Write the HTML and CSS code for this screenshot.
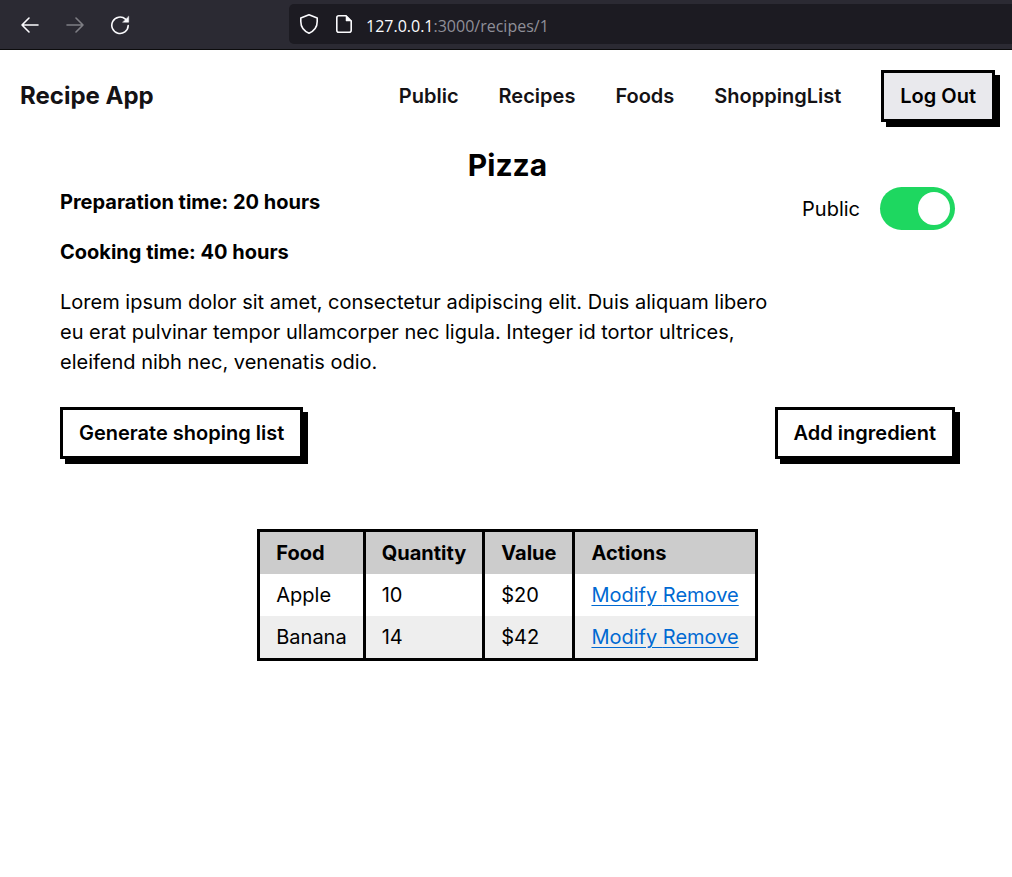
FILE: index.html
```html
<!DOCTYPE html>
<html lang="en">
<head>
<meta charset="utf-8">
<meta name="viewport" content="width=device-width, initial-scale=1">
<title>Recipe App</title>
<link rel="stylesheet" href="styles.css">
</head>
<body>
<div class="toolbar">
  <div class="toolbar-nav">
    <button class="tool" type="button" aria-label="Back">
      <svg viewBox="0 0 20 20" width="20" height="20"><path d="M18 10H2M9 3L2 10l7 7"/></svg>
    </button>
    <button class="tool tool-off" type="button" aria-label="Forward" disabled>
      <svg viewBox="0 0 20 20" width="20" height="20"><path d="M2 10h16M11 3l7 7-7 7"/></svg>
    </button>
    <button class="tool" type="button" aria-label="Reload">
      <svg viewBox="0 0 20 20" width="20" height="20"><path d="M15.5 4.200A8.200 8.200 0 1 0 18.200 10.500"/><path class="solid" d="M18.700 1.500v5.700h-5.800z"/></svg>
    </button>
  </div>
  <div class="address">
    <div class="site-icons">
      <svg viewBox="0 0 20 22" width="20" height="22"><path d="M10 1.800L18.200 5V8.500C18.200 13.500 15 18 10 20.200C5 18 1.800 13.500 1.800 8.500V5Z"/></svg>
      <svg viewBox="0 0 20 22" width="20" height="22"><path d="M12 2.800H4.800a2 2 0 0 0-2 2v12.400a2 2 0 0 0 2 2h10.400a2 2 0 0 0 2-2V8z"/><path class="solid" d="M12 2.800v5.200h5.200z"/></svg>
    </div>
    <span class="url"><span class="host">127.0.0.1</span>:3000/recipes/1</span>
  </div>
</div>

<header class="header">
  <a class="brand" href="#">Recipe App</a>
  <nav class="menu">
    <a href="#">Public</a>
    <a href="#">Recipes</a>
    <a href="#">Foods</a>
    <a href="#">ShoppingList</a>
    <button class="btn btn-tinted" type="button">Log Out</button>
  </nav>
</header>

<main class="recipe">
  <h1 class="title">Pizza</h1>
  <div class="summary">
    <div class="details">
      <p class="time">Preparation time: 20 hours</p>
      <p class="time">Cooking time: 40 hours</p>
      <p>Lorem ipsum dolor sit amet, consectetur adipiscing elit. Duis aliquam libero eu erat pulvinar tempor ullamcorper nec ligula. Integer id tortor ultrices, eleifend nibh nec, venenatis odio.</p>
    </div>
    <div class="visibility">
      <label for="public">Public</label>
      <input class="switch" id="public" type="checkbox" checked>
    </div>
  </div>
  <div class="actions">
    <button class="btn" type="button">Generate shoping list</button>
    <button class="btn" type="button">Add ingredient</button>
  </div>
  <table class="foods">
    <thead>
      <tr><th>Food</th><th>Quantity</th><th>Value</th><th>Actions</th></tr>
    </thead>
    <tbody>
      <tr><td>Apple</td><td>10</td><td>$20</td><td><a href="#">Modify </a><a href="#">Remove</a></td></tr>
      <tr><td>Banana</td><td>14</td><td>$42</td><td><a href="#">Modify </a><a href="#">Remove</a></td></tr>
    </tbody>
  </table>
</main>
</body>
</html>
```
FILE: styles.css
```css
* {
  box-sizing: border-box;
}

body {
  margin: 0;
  background: #fff;
  color: #000;
  font: 400 20px/30px Inter, sans-serif;
}

p,
h1 {
  margin: 0;
}

/* Browser toolbar */
.toolbar {
  display: flex;
  align-items: center;
  height: 50px;
  padding-bottom: 1px;
  background: #2b2a33;
  border-bottom: 1px solid #0c0c0d;
}

.toolbar-nav {
  display: flex;
  flex: none;
  gap: 25px;
  width: 289px;
  padding: 1px 0 0 20px;
}

.toolbar svg {
  display: block;
  fill: none;
  stroke: #fbfbfe;
  stroke-width: 1.6;
  stroke-linecap: round;
  stroke-linejoin: round;
}

.toolbar .solid {
  fill: #fbfbfe;
  stroke-width: 0.5;
}

.tool {
  padding: 0;
  border: 0;
  background: none;
}

.tool-off {
  opacity: 0.4;
}

.address {
  display: flex;
  flex: 1;
  align-items: center;
  gap: 12px;
  height: 40px;
  padding-left: 10px;
  border-radius: 5px 0 0 5px;
  background: #1c1b22;
}

.site-icons {
  display: flex;
  gap: 15px;
}

.url {
  padding-top: 4px;
  color: #8f8f98;
  font: 400 16px/24px "Open Sans", "Noto Sans", sans-serif;
}

.host {
  color: #fbfbfe;
}

/* Site header */
.header {
  display: flex;
  align-items: center;
  justify-content: space-between;
  padding: 20px 17px 20px 20px;
}

.header a {
  color: #141215;
  text-decoration: none;
}

.brand {
  font-size: 24px;
  line-height: 32px;
  font-weight: 700;
}

.menu {
  display: flex;
  align-items: center;
  gap: 40px;
  font-weight: 600;
}

.btn {
  padding: 8px 16px;
  border: 3px solid #000;
  background: #fff;
  box-shadow: 5px 5px 0 #000;
  color: #000;
  font: inherit;
  font-weight: 600;
}

.btn-tinted {
  background: #e9e9ed;
}

/* Recipe */
.recipe {
  padding: 0 57px 40px 60px;
}

.title {
  padding-top: 1px;
  font-size: 30px;
  line-height: 44px;
  text-align: center;
}

.summary {
  display: flex;
  justify-content: space-between;
}

.details {
  display: grid;
  gap: 20px;
  flex: 0 1 80%;
}

.time {
  font-weight: 700;
}

.visibility {
  display: flex;
  align-items: center;
  align-self: flex-start;
  gap: 20px;
}

.switch {
  appearance: none;
  display: flex;
  align-items: center;
  width: 75px;
  height: 43px;
  margin: 0;
  padding: 5px;
  border-radius: 22px;
  background: #1ed760;
}

.switch::before {
  content: "";
  width: 32px;
  height: 33px;
  border-radius: 50%;
  background: #fff;
}

.switch:checked::before {
  margin-left: auto;
}

.actions {
  display: flex;
  justify-content: space-between;
  padding: 30px 0 70px;
}

/* Ingredient table */
.foods {
  margin: 0 auto;
  border: 3px solid #000;
  border-spacing: 0;
}

.foods th,
.foods td {
  padding: 6px 16px;
  text-align: left;
}

.foods th + th,
.foods td + td {
  border-left: 3px solid #000;
}

.foods th {
  background: #ccc;
}

.foods tbody tr:nth-child(even) {
  background: #eee;
}

.foods a {
  color: #0069d2;
  text-decoration-thickness: 1px;
  text-underline-offset: 3px;
}
```
